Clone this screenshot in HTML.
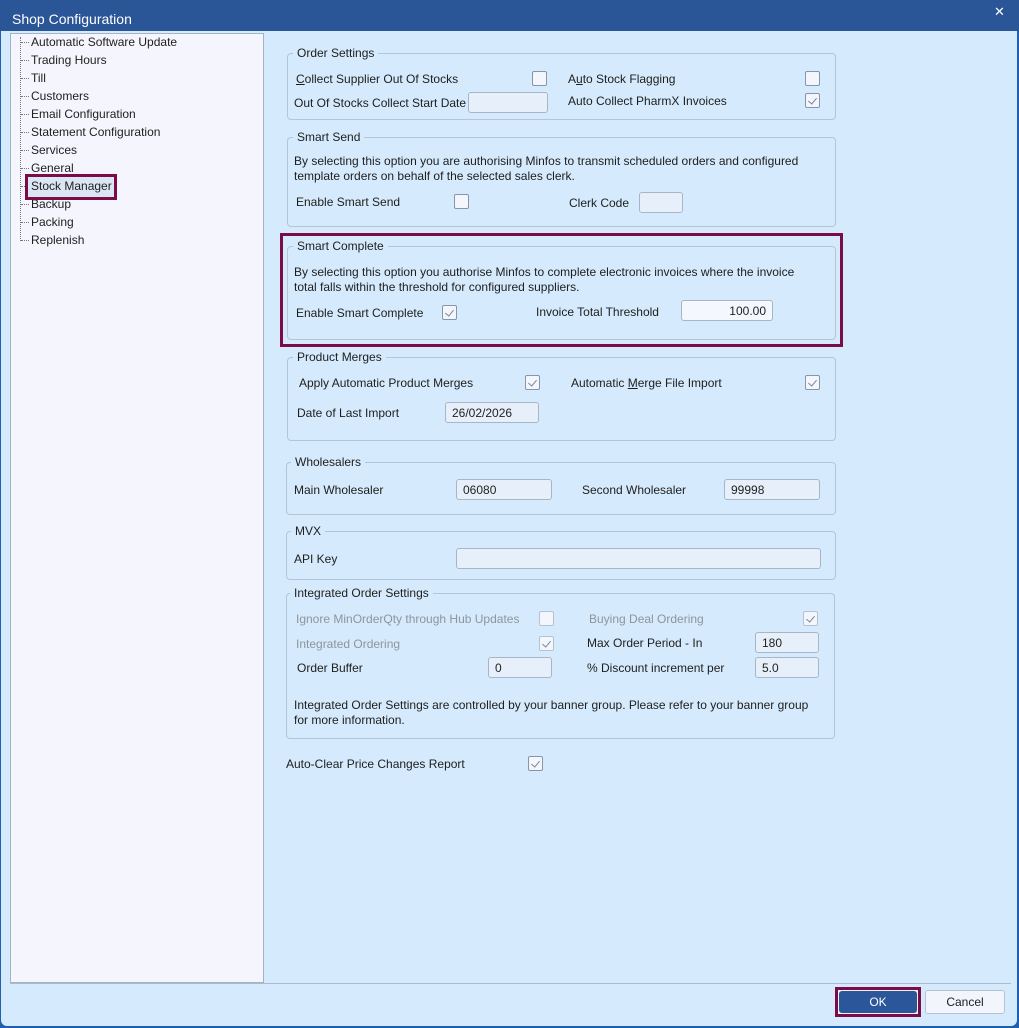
<!DOCTYPE html>
<html><head><meta charset="utf-8"><style>
*{margin:0;padding:0;box-sizing:border-box}
body{width:1019px;height:1028px;overflow:hidden;background:#1d5fb0;font-family:"Liberation Sans",sans-serif;font-size:12px;color:#1e1e1e;position:relative}
.win{position:absolute;left:1px;top:0;width:1016px;height:1026px;background:#d5eafc;border-radius:0 0 6px 6px}
.title{position:absolute;left:0;top:0;width:1019px;height:31px;background:#2a5597;color:#fff;font-size:14px}
.a{position:absolute;white-space:nowrap;line-height:16px}
.g{color:#8f959b}
.box{position:absolute;border:1px solid #b3c5d6;border-radius:4px}
.lg{position:absolute;background:#d5eafc;padding:0 4px;line-height:14px;white-space:nowrap}
.cb{position:absolute;width:15px;height:15px;border:1px solid #8596ab;background:#f4f6fd;border-radius:2px}
.cb.c::after{content:"";position:absolute;left:4px;top:2px;width:4px;height:7px;border:solid #7a8694;border-width:0 1.3px 1.3px 0;transform:rotate(40deg)}
.cb.d{border-color:#b7c2cf}
.in{position:absolute;border:1px solid #a6b6c6;border-radius:3px;background:#e7f0fa;padding:3px 6px 1px;line-height:15px;color:#222}
.hl{position:absolute;border:3px solid #7c0c47}
</style></head><body>
<div class="win"></div>
<div class="title"><span class="a" style="left:12px;top:11px">Shop Configuration</span><span class="a" style="left:994px;top:4px;font-size:13px">✕</span></div>

<div style="position:absolute;left:10px;top:33px;width:254px;height:950px;background:#f5f6fd;border:1px solid #a3b3c4"></div>
<div style="position:absolute;left:20px;top:37px;height:204px;border-left:1px dotted #777"></div>
<div id="tree"></div>
<script>
var items=["Automatic Software Update","Trading Hours","Till","Customers","Email Configuration","Statement Configuration","Services","General","Stock Manager","Backup","Packing","Replenish"];
var h="";items.forEach(function(t,i){var y=42+i*18;h+='<div style="position:absolute;left:21px;top:'+y+'px;width:8px;border-top:1px dotted #777"></div><span class="a" style="left:31px;top:'+(y-8)+'px">'+t+'</span>';});
document.getElementById("tree").innerHTML=h;
</script>
<div style="position:absolute;left:28px;top:177px;width:86px;height:20px;background:#dbe6f4"></div>
<span class="a" style="left:31px;top:178px">Stock Manager</span>
<div class="hl" style="left:25px;top:174px;width:92px;height:26px"></div>

<div class="box" style="left:287px;top:53px;width:549px;height:67px"></div>
<span class="lg" style="left:293px;top:46px">Order Settings</span>
<span class="a" style="left:296px;top:71px"><u>C</u>ollect Supplier Out Of Stocks</span>
<div class="cb" style="left:532px;top:71px"></div>
<span class="a" style="left:568px;top:71px">A<u>u</u>to Stock Flagging</span>
<div class="cb" style="left:805px;top:71px"></div>
<span class="a" style="left:294px;top:95px">Out Of Stocks Collect Start Date</span>
<div class="in" style="left:468px;top:92px;width:80px;height:21px"></div>
<span class="a" style="left:568px;top:93px">Auto Collect PharmX Invoices</span>
<div class="cb c" style="left:805px;top:93px"></div>

<div class="box" style="left:287px;top:137px;width:549px;height:90px"></div>
<span class="lg" style="left:293px;top:130px">Smart Send</span>
<span class="a" style="left:294px;top:153px">By selecting this option you are authorising Minfos to transmit scheduled orders and configured</span>
<span class="a" style="left:294px;top:168px">template orders on behalf of the selected sales clerk.</span>
<span class="a" style="left:296px;top:194px">Enable Smart Send</span>
<div class="cb" style="left:454px;top:194px"></div>
<span class="a" style="left:569px;top:195px">Clerk Code</span>
<div class="in" style="left:639px;top:192px;width:44px;height:21px"></div>

<div class="box" style="left:287px;top:246px;width:549px;height:94px"></div>
<span class="lg" style="left:293px;top:239px">Smart Complete</span>
<span class="a" style="left:294px;top:264px">By selecting this option you authorise Minfos to complete electronic invoices where the invoice</span>
<span class="a" style="left:294px;top:279px">total falls within the threshold for configured suppliers.</span>
<span class="a" style="left:296px;top:305px">Enable Smart Complete</span>
<div class="cb c" style="left:442px;top:305px"></div>
<span class="a" style="left:536px;top:304px">Invoice Total Threshold</span>
<div class="in" style="left:681px;top:300px;width:92px;height:21px;background:#f4f7fd;text-align:right;color:#222">100.00</div>
<div class="hl" style="left:280px;top:233px;width:563px;height:114px"></div>

<div class="box" style="left:287px;top:357px;width:549px;height:84px"></div>
<span class="lg" style="left:293px;top:350px">Product Merges</span>
<span class="a" style="left:299px;top:375px">Apply Automatic Product Merges</span>
<div class="cb c" style="left:525px;top:375px"></div>
<span class="a" style="left:571px;top:375px">Automatic <u>M</u>erge File Import</span>
<div class="cb c" style="left:805px;top:375px"></div>
<span class="a" style="left:297px;top:405px">Date of Last Import</span>
<div class="in" style="left:445px;top:402px;width:94px;height:21px">26/02/2026</div>

<div class="box" style="left:286px;top:462px;width:550px;height:53px"></div>
<span class="lg" style="left:291px;top:455px">Wholesalers</span>
<span class="a" style="left:294px;top:482px">Main Wholesaler</span>
<div class="in" style="left:456px;top:479px;width:96px;height:21px">06080</div>
<span class="a" style="left:582px;top:482px">Second Wholesaler</span>
<div class="in" style="left:724px;top:479px;width:96px;height:21px">99998</div>

<div class="box" style="left:286px;top:531px;width:550px;height:49px"></div>
<span class="lg" style="left:291px;top:524px">MVX</span>
<span class="a" style="left:294px;top:551px">API Key</span>
<div class="in" style="left:456px;top:548px;width:365px;height:21px"></div>

<div class="box" style="left:286px;top:593px;width:549px;height:146px"></div>
<span class="lg" style="left:290px;top:586px">Integrated Order Settings</span>
<span class="a g" style="left:296px;top:611px">Ignore MinOrderQty through Hub Updates</span>
<div class="cb d" style="left:539px;top:611px"></div>
<span class="a g" style="left:589px;top:611px">Buying Deal Ordering</span>
<div class="cb c d" style="left:803px;top:611px"></div>
<span class="a g" style="left:296px;top:636px">Integrated Ordering</span>
<div class="cb c d" style="left:539px;top:636px"></div>
<span class="a" style="left:587px;top:635px">Max Order Period - In</span>
<div class="in" style="left:755px;top:632px;width:64px;height:21px">180</div>
<span class="a" style="left:297px;top:660px">Order Buffer</span>
<div class="in" style="left:488px;top:657px;width:64px;height:21px">0</div>
<span class="a" style="left:587px;top:660px">% Discount increment per</span>
<div class="in" style="left:755px;top:657px;width:64px;height:21px">5.0</div>
<span class="a" style="left:294px;top:697px">Integrated Order Settings are controlled by your banner group. Please refer to your banner group</span>
<span class="a" style="left:294px;top:712px">for more information.</span>

<span class="a" style="left:286px;top:756px">Auto-Clear Price Changes Report</span>
<div class="cb c" style="left:528px;top:756px"></div>

<div style="position:absolute;left:10px;top:983px;width:1001px;border-top:1px solid #a9bacb"></div>
<div style="position:absolute;left:835px;top:987px;width:86px;height:30px;border:3px solid #7c0c47;background:#eef2f8"></div>
<div style="position:absolute;left:839px;top:991px;width:78px;height:22px;background:#2b579a;border-radius:3px;color:#fff;text-align:center;line-height:22px">OK</div>
<div style="position:absolute;left:925px;top:990px;width:80px;height:24px;background:#f3f5fd;border:1px solid #b5c4d4;border-radius:3px;text-align:center;line-height:22px">Cancel</div>
</body></html>
